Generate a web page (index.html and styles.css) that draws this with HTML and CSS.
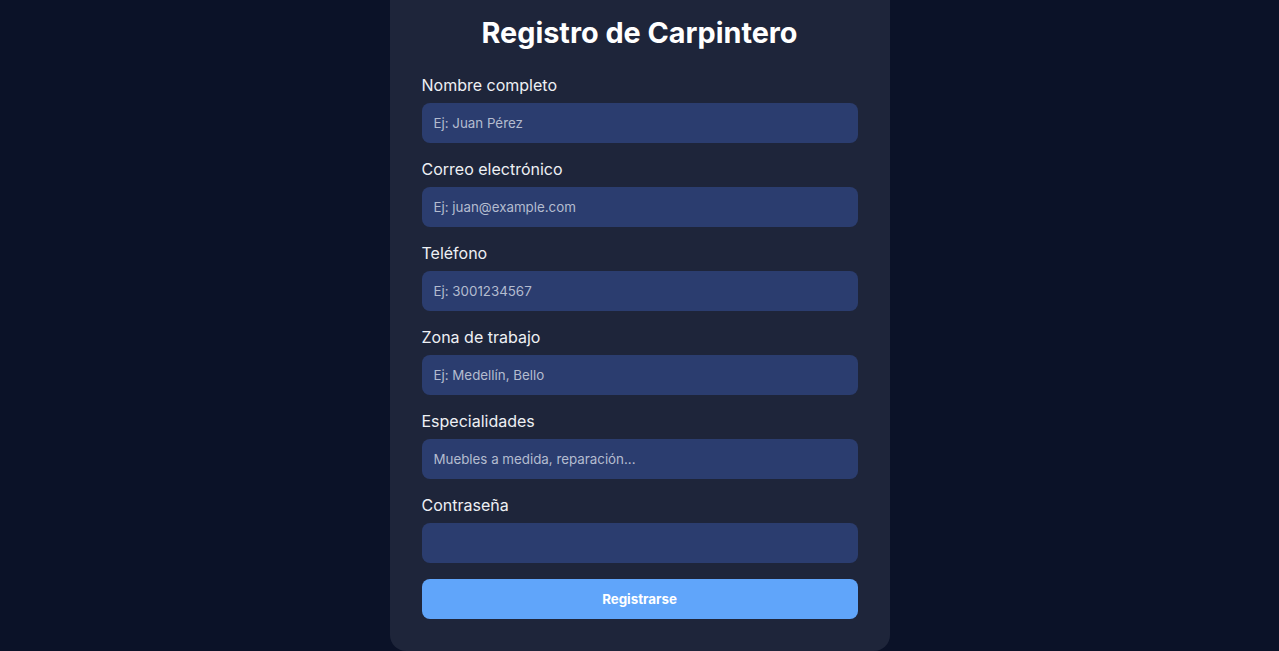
FILE: index.html
```html
<!DOCTYPE html>
<html lang="es">
<head>
<meta charset="utf-8">
<title>Registro de Carpintero</title>
<link rel="stylesheet" href="styles.css">
</head>
<body>
<main class="page">
  <form class="card">
    <h1 class="title">Registro de Carpintero</h1>
    <div class="fields">
      <div class="field">
        <label class="label">Nombre completo</label>
        <input class="input" type="text" placeholder="Ej: Juan Pérez">
      </div>
      <div class="field">
        <label class="label">Correo electrónico</label>
        <input class="input" type="email" placeholder="Ej: juan@example.com">
      </div>
      <div class="field">
        <label class="label">Teléfono</label>
        <input class="input" type="text" placeholder="Ej: 3001234567">
      </div>
      <div class="field">
        <label class="label">Zona de trabajo</label>
        <input class="input" type="text" placeholder="Ej: Medellín, Bello">
      </div>
      <div class="field">
        <label class="label">Especialidades</label>
        <input class="input" type="text" placeholder="Muebles a medida, reparación...">
      </div>
      <div class="field">
        <label class="label">Contraseña</label>
        <input class="input" type="password">
      </div>
    </div>
    <button class="submit" type="button">Registrarse</button>
  </form>
</main>
</body>
</html>
```
FILE: styles.css
```css
* { box-sizing: border-box; }
html, body { margin: 0; padding: 0; }
body {
  background: #0b1228;
  font-family: Inter, "Noto Sans", sans-serif;
  color: #f1f5f9;
  overflow: hidden;
}
.page {
  height: 100vh;
  display: flex;
  justify-content: center;
  align-items: flex-end;
}
.card {
  width: 500px;
  flex-shrink: 0;
  background: #1e253a;
  border-radius: 16px;
  padding: 32px;
  display: flex;
  flex-direction: column;
}
.title {
  margin: 0 0 23px;
  text-align: center;
  font-size: 28.8px;
  line-height: 34px;
  font-weight: 700;
  color: #ffffff;
}
.fields {
  display: flex;
  flex-direction: column;
  gap: 14px;
}
.field {
  display: flex;
  flex-direction: column;
  gap: 6px;
}
.label {
  font-size: 16px;
  line-height: 24px;
  color: #eef0f4;
}
.input {
  height: 40px;
  border: none;
  border-radius: 8px;
  background: #2b3d6f;
  padding: 0 12px;
  font-family: Inter, "Noto Sans", sans-serif;
  font-size: 13.333px;
  color: #e5e7eb;
  outline: none;
}
.input::placeholder { color: #b4bccf; }
.submit {
  margin-top: 16px;
  height: 40px;
  border: none;
  border-radius: 8px;
  background: #60a5fa;
  color: #ffffff;
  font-family: Inter, "Noto Sans", sans-serif;
  font-size: 13.333px;
  font-weight: 700;
}
```
